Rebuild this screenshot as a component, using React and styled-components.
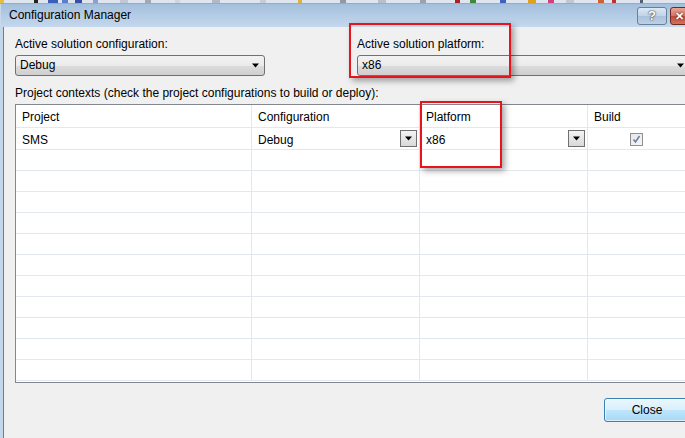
import React from 'react';
import styled, { createGlobalStyle } from 'styled-components';

const GlobalStyle = createGlobalStyle`
  html, body {
    margin: 0;
    padding: 0;
    overflow: hidden;
    background: #f0f0f0;
  }
  body {
    font-family: "Segoe UI", "Liberation Sans", Arial, sans-serif;
    font-size: 12px;
    color: #000;
  }
`;

const toolbarBits = [
  { x: 0, w: 4, c: '#e8c040' },
  { x: 34, w: 4, c: '#222' },
  { x: 48, w: 10, c: '#3b5fb8' },
  { x: 62, w: 6, c: '#5a7fd0' },
  { x: 75, w: 7, c: '#3650a8' },
  { x: 93, w: 5, c: '#8aa0d0' },
  { x: 120, w: 8, c: '#c0c8d8' },
  { x: 145, w: 6, c: '#a0a8b8' },
  { x: 175, w: 5, c: '#d0d4dc' },
  { x: 212, w: 8, c: '#b0b8c8' },
  { x: 260, w: 6, c: '#c8ccd4' },
  { x: 298, w: 4, c: '#e0b040' },
  { x: 340, w: 6, c: '#9098a8' },
  { x: 378, w: 8, c: '#b8c0cc' },
  { x: 420, w: 6, c: '#9aa2b0' },
  { x: 455, w: 5, c: '#b02020' },
  { x: 470, w: 6, c: '#3a8a3a' },
  { x: 500, w: 6, c: '#4060c0' },
  { x: 528, w: 8, c: '#e0a020' },
  { x: 548, w: 6, c: '#d04080' },
  { x: 566, w: 8, c: '#c0c8d0' },
  { x: 598, w: 6, c: '#d06030' },
  { x: 612, w: 4, c: '#c03030' },
  { x: 640, w: 3, c: '#506070' },
];

const columns = ['Project', 'Configuration', 'Platform', 'Build'];
const emptyRows = Array.from({ length: 11 });

const CaretIcon = ({ size = 7 }) => (
  <svg width={size} height={Math.ceil(size / 2) + 1} viewBox="0 0 7 4">
    <path d="M0 0 H7 L3.5 4 Z" fill="#000" />
  </svg>
);

const App = () => {
  return (
    <>
      <GlobalStyle />
      <Screen>
        <ToolStrip>
          {toolbarBits.map((b, i) => (
            <ToolBit key={i} style={{ left: b.x, width: b.w, background: b.c }} />
          ))}
        </ToolStrip>
        <Window>
          <TitleBar>
            <Title>Configuration Manager</Title>
            <CaptionButtons>
              <HelpButton>?</HelpButton>
              <CloseX>✕</CloseX>
            </CaptionButtons>
          </TitleBar>
          <Frame>
            <Client>
              <FieldRow>
                <Field $width="250px">
                  <Label>Active solution configuration:</Label>
                  <Combo>
                    <span>Debug</span>
                    <CaretIcon />
                  </Combo>
                </Field>
                <Field $width="333px">
                  <Label>Active solution platform:</Label>
                  <Combo>
                    <span>x86</span>
                    <CaretIcon />
                  </Combo>
                </Field>
              </FieldRow>

              <Label>Project contexts (check the project configurations to build or deploy):</Label>

              <Grid>
                {columns.map((c) => (
                  <HeadCell key={c}>{c}</HeadCell>
                ))}
                <Cell>SMS</Cell>
                <Cell>
                  Debug
                  <CellDrop>
                    <CaretIcon />
                  </CellDrop>
                </Cell>
                <Cell>
                  x86
                  <CellDrop>
                    <CaretIcon />
                  </CellDrop>
                </Cell>
                <Cell $center>
                  <CheckBox>
                    <svg width="9" height="9" viewBox="0 0 9 9">
                      <path d="M1.5 4.5 L3.5 7 L7.5 1" stroke="#6a7fa8" strokeWidth="1.6" fill="none" />
                    </svg>
                  </CheckBox>
                </Cell>
                {emptyRows.map((_, r) =>
                  columns.map((c) => <Cell key={`${r}-${c}`} />)
                )}
              </Grid>

              <ButtonRow>
                <CloseButton>Close</CloseButton>
              </ButtonRow>
            </Client>
          </Frame>
        </Window>

        <Callout style={{ left: 349, top: 23, width: 162, height: 55 }} />
        <Callout style={{ left: 420, top: 101, width: 82, height: 67 }} />
      </Screen>
    </>
  );
};

const Screen = styled.div`
  position: relative;
  width: 685px;
  height: 438px;
  overflow: hidden;
  background: #f0f0f0;
`;

const ToolStrip = styled.div`
  position: relative;
  height: 3px;
  background: #dfe5ee;
  border-bottom: 1px solid #9aabbf;
`;

const ToolBit = styled.div`
  position: absolute;
  top: 0;
  height: 3px;
`;

const Window = styled.div`
  width: 720px;
  display: flex;
  flex-direction: column;
`;

const TitleBar = styled.div`
  height: 23px;
  display: flex;
  align-items: center;
  justify-content: space-between;
  padding-left: 8px;
  background: linear-gradient(to bottom, #a3bfdc 0%, #b6cde6 55%, #c4d8ee 100%);
  border-left: 1px solid #c9d9ea;
`;

const Title = styled.div`
  font-size: 12px;
  color: #000;
  padding-bottom: 1px;
`;

const CaptionButtons = styled.div`
  display: flex;
  gap: 3px;
  align-self: flex-start;
  margin-top: 3px;
`;

const HelpButton = styled.div`
  box-sizing: border-box;
  width: 30px;
  height: 18px;
  border: 1px solid #6a7f98;
  border-radius: 3px;
  background: linear-gradient(to bottom, #dce8f4 0%, #c1d3e7 50%, #abc2dc 51%, #bcd0e6 100%);
  color: #fff;
  font-weight: bold;
  font-size: 13px;
  line-height: 16px;
  text-align: center;
  text-shadow: 0 0 2px #333, 0 0 1px #333;
`;

const CloseX = styled.div`
  box-sizing: border-box;
  width: 50px;
  height: 18px;
  border: 1px solid #6b2a22;
  border-radius: 3px;
  background: linear-gradient(to bottom, #e8a493 0%, #d2735d 50%, #c14a31 51%, #d2735d 100%);
  color: #fff;
  font-weight: bold;
  font-size: 11px;
  line-height: 16px;
  padding-left: 4px;
  text-shadow: 0 0 2px #300;
`;

const Frame = styled.div`
  display: flex;
  border-left: 3px solid #c4d6ea;
`;

const Client = styled.div`
  flex: 1;
  display: flex;
  flex-direction: column;
  border-left: 1px solid #707c8a;
  background: #f0f0f0;
  padding: 9px 30px 0 11px;
  height: 420px;
  box-sizing: border-box;
`;

const FieldRow = styled.div`
  display: flex;
  gap: 92px;
  margin-bottom: 9px;
`;

const Field = styled.div`
  display: flex;
  flex-direction: column;
  width: ${(p) => p.$width};
`;

const Label = styled.div`
  height: 16px;
  line-height: 16px;
  white-space: nowrap;
`;

const Combo = styled.div`
  margin-top: 3px;
  height: 19px;
  border: 1px solid #707070;
  border-radius: 3px;
  background: linear-gradient(to bottom, #f2f2f2 0%, #ebebeb 50%, #dddddd 51%, #cfcfcf 100%);
  display: flex;
  align-items: center;
  justify-content: space-between;
  padding: 0 5px 0 4px;

  span {
    line-height: 19px;
  }
`;

const Grid = styled.div`
  margin-top: 3px;
  height: 277px;
  display: grid;
  grid-template-columns: 236px 168px 168px 1fr;
  grid-template-rows: 23px 22px;
  grid-auto-rows: 21px;
  align-content: start;
  overflow: hidden;
  border: 1px solid #828790;
  background: #fff;
`;

const HeadCell = styled.div`
  display: flex;
  align-items: center;
  padding: 2px 0 0 6px;
  border-right: 1px solid #e3e8ef;
  border-bottom: 1px solid #e3e8ef;
`;

const Cell = styled.div`
  position: relative;
  display: flex;
  align-items: center;
  justify-content: ${(p) => (p.$center ? 'center' : 'flex-start')};
  padding: 2px 0 0 ${(p) => (p.$center ? '0' : '6px')};
  border-right: 1px solid #e3e8ef;
  border-bottom: 1px solid #e3e8ef;
`;

const CellDrop = styled.div`
  position: absolute;
  right: 2px;
  top: 2px;
  width: 15px;
  height: 15px;
  border: 1px solid #707070;
  background: linear-gradient(to bottom, #f4f4f4 0%, #e6e6e6 50%, #d9d9d9 100%);
  display: flex;
  align-items: center;
  justify-content: center;
`;

const CheckBox = styled.div`
  width: 11px;
  height: 11px;
  margin-left: -4px;
  border: 1px solid #8f8f8f;
  background: linear-gradient(to bottom right, #e6e6e6, #f6f6f6);
  display: flex;
  align-items: center;
  justify-content: center;
`;

const ButtonRow = styled.div`
  display: flex;
  justify-content: flex-end;
  padding-top: 15px;
`;

const CloseButton = styled.div`
  box-sizing: border-box;
  width: 86px;
  height: 24px;
  border: 1px solid #3c7fb1;
  border-radius: 3px;
  background: linear-gradient(to bottom, #eaf6fd 0%, #d9f0fc 50%, #bee6fd 51%, #a7d9f5 100%);
  box-shadow: inset 0 0 0 1px rgba(255, 255, 255, 0.6);
  display: flex;
  align-items: center;
  justify-content: center;
`;

const Callout = styled.div`
  position: absolute;
  box-sizing: border-box;
  border: 2px solid #e8141c;
  box-shadow: 3px 3px 6px rgba(0, 0, 0, 0.35);
  pointer-events: none;
`;

export default App;
